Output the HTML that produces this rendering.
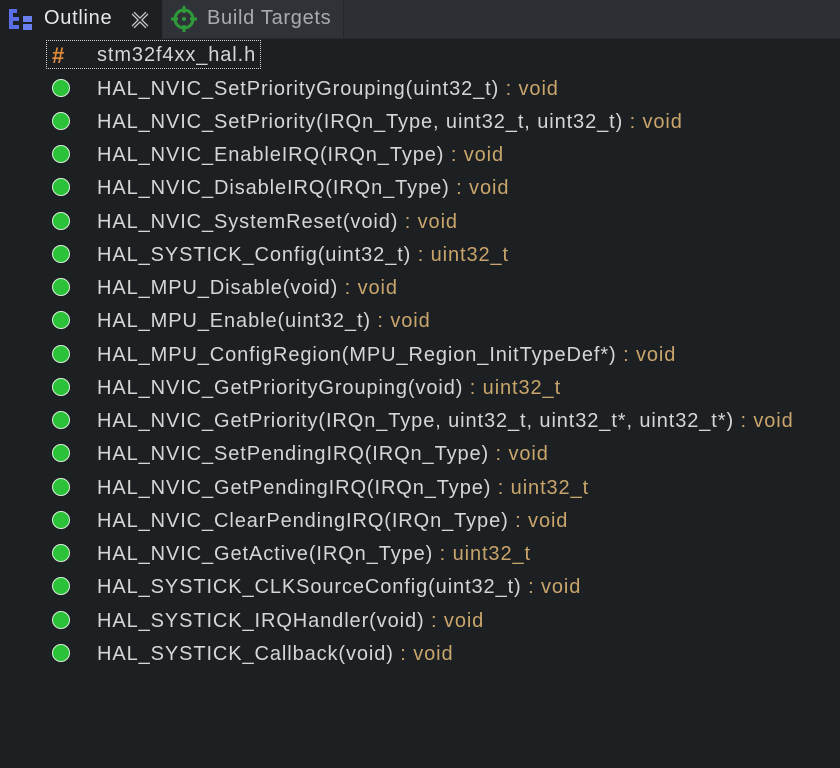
<!DOCTYPE html>
<html><head><meta charset="utf-8"><style>
body{margin:0;width:840px;height:768px;background:#1d2023;font-family:"Liberation Sans",sans-serif;overflow:hidden;position:relative}
.bar{position:absolute;left:0;top:0;width:840px;height:38px;background:#2c3034;border-bottom:1px solid #26292c}
.tab1{position:absolute;left:0;top:0;width:162px;height:39px;background:#1d2023}
.tab2{position:absolute;left:163px;top:0;width:180px;height:38px;background:#2f3337;border-right:1px solid #25282b}
.t{position:absolute;top:7px;font-size:20px;color:#e8e8e8;letter-spacing:0.7px}
.row{position:absolute;left:0;height:33px;width:840px;font-size:20px;letter-spacing:0.9px;color:#d6d6d6;white-space:nowrap}
.row .d{position:absolute;left:52px;top:6px;width:16px;height:16px;border-radius:50%;background:#2bc23a;border:1.5px solid #d8f0d8}
.row .x{position:absolute;left:97px;top:5px}
.ty{color:#c9a56b}
</style></head><body>
<div class="bar"></div>
<div class="tab1"></div>
<div class="tab2"></div>
<svg style="position:absolute;left:8px;top:8px" width="30" height="24"><rect x="1" y="1" width="4" height="20" fill="#5a6ee8"/><rect x="1" y="9" width="10" height="4" fill="#5a6ee8"/><rect x="1" y="17" width="10" height="4" fill="#5a6ee8"/><rect x="15" y="8" width="9" height="6" fill="#6b7ef0"/><rect x="15" y="16" width="9" height="6" fill="#6b7ef0"/><rect x="1" y="1" width="8" height="4" fill="#5a6ee8"/></svg>
<div class="t" style="left:44px">Outline</div>
<svg style="position:absolute;left:130px;top:10px" width="20" height="20"><path d="M3 3 L17 17 M17 3 L3 17" stroke="#ccc" stroke-width="4"/><path d="M3 3 L17 17 M17 3 L3 17" stroke="#1d2023" stroke-width="1.5"/></svg>
<svg style="position:absolute;left:170px;top:5px" width="28" height="28"><circle cx="14" cy="14" r="9" fill="none" stroke="#2f9a3a" stroke-width="3"/><path d="M14 1V8M14 20V27M1 14H8M20 14H27" stroke="#2f9a3a" stroke-width="3"/><circle cx="14" cy="14" r="2" fill="#2f9a3a"/></svg>
<div class="t" style="left:207px;color:#a9acaf">Build Targets</div>
<div style="position:absolute;left:46px;top:40px;width:215px;height:29px;border:1px dotted #cfd3d6;box-sizing:border-box"></div>
<div style="position:absolute;left:52px;top:43px;font-size:22px;font-weight:bold;color:#e08a3a">#</div>
<div style="position:absolute;left:97px;top:44px;font-size:20px;letter-spacing:0.9px;color:#d6d6d6">stm32f4xx_hal.h</div>
<div class="row" style="top:73px"><span class="d"></span><span class="x">HAL_NVIC_SetPriorityGrouping(uint32_t)<span class="ty"> : void</span></span></div>
<div class="row" style="top:106px"><span class="d"></span><span class="x">HAL_NVIC_SetPriority(IRQn_Type, uint32_t, uint32_t)<span class="ty"> : void</span></span></div>
<div class="row" style="top:139px"><span class="d"></span><span class="x">HAL_NVIC_EnableIRQ(IRQn_Type)<span class="ty"> : void</span></span></div>
<div class="row" style="top:172px"><span class="d"></span><span class="x">HAL_NVIC_DisableIRQ(IRQn_Type)<span class="ty"> : void</span></span></div>
<div class="row" style="top:206px"><span class="d"></span><span class="x">HAL_NVIC_SystemReset(void)<span class="ty"> : void</span></span></div>
<div class="row" style="top:239px"><span class="d"></span><span class="x">HAL_SYSTICK_Config(uint32_t)<span class="ty"> : uint32_t</span></span></div>
<div class="row" style="top:272px"><span class="d"></span><span class="x">HAL_MPU_Disable(void)<span class="ty"> : void</span></span></div>
<div class="row" style="top:305px"><span class="d"></span><span class="x">HAL_MPU_Enable(uint32_t)<span class="ty"> : void</span></span></div>
<div class="row" style="top:339px"><span class="d"></span><span class="x">HAL_MPU_ConfigRegion(MPU_Region_InitTypeDef*)<span class="ty"> : void</span></span></div>
<div class="row" style="top:372px"><span class="d"></span><span class="x">HAL_NVIC_GetPriorityGrouping(void)<span class="ty"> : uint32_t</span></span></div>
<div class="row" style="top:405px"><span class="d"></span><span class="x">HAL_NVIC_GetPriority(IRQn_Type, uint32_t, uint32_t*, uint32_t*)<span class="ty"> : void</span></span></div>
<div class="row" style="top:438px"><span class="d"></span><span class="x">HAL_NVIC_SetPendingIRQ(IRQn_Type)<span class="ty"> : void</span></span></div>
<div class="row" style="top:472px"><span class="d"></span><span class="x">HAL_NVIC_GetPendingIRQ(IRQn_Type)<span class="ty"> : uint32_t</span></span></div>
<div class="row" style="top:505px"><span class="d"></span><span class="x">HAL_NVIC_ClearPendingIRQ(IRQn_Type)<span class="ty"> : void</span></span></div>
<div class="row" style="top:538px"><span class="d"></span><span class="x">HAL_NVIC_GetActive(IRQn_Type)<span class="ty"> : uint32_t</span></span></div>
<div class="row" style="top:571px"><span class="d"></span><span class="x">HAL_SYSTICK_CLKSourceConfig(uint32_t)<span class="ty"> : void</span></span></div>
<div class="row" style="top:605px"><span class="d"></span><span class="x">HAL_SYSTICK_IRQHandler(void)<span class="ty"> : void</span></span></div>
<div class="row" style="top:638px"><span class="d"></span><span class="x">HAL_SYSTICK_Callback(void)<span class="ty"> : void</span></span></div>
</body></html>
